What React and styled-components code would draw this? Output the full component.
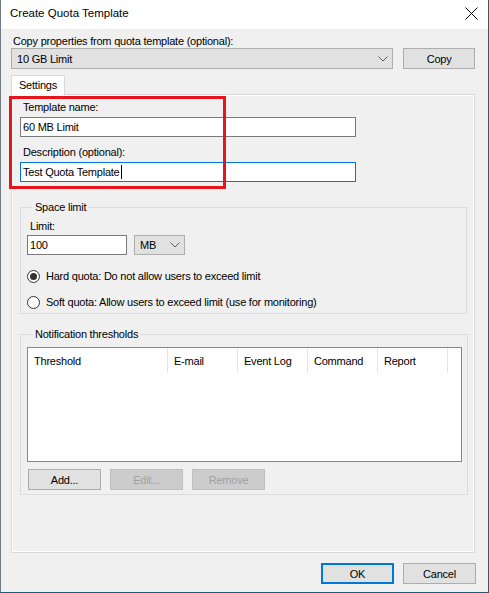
import React from 'react';
import styled, { createGlobalStyle, css } from 'styled-components';

const GlobalStyle = createGlobalStyle`
  html, body {
    margin: 0;
    padding: 0;
    background: #ffffff;
  }
  body {
    font-family: 'Liberation Sans', Arial, sans-serif;
    font-size: 11px;
    letter-spacing: -0.22px;
    color: #000;
  }
  * {
    box-sizing: border-box;
  }
`;

const Window = styled.div`
  position: relative;
  width: 489px;
  height: 593px;
  background: #f0f0f0;
  border-left: 1px solid #6f7a84;
  border-right: 1px solid #3d5668;
  border-bottom: 1px solid #1b5b78;
  display: flex;
  flex-direction: column;
`;

const TitleBar = styled.div`
  height: 29px;
  background: #ffffff;
  display: flex;
  align-items: center;
  justify-content: space-between;
  padding: 0 10px 3px 9px;
  flex: none;
`;

const Title = styled.span`
  font-size: 11.5px;
  letter-spacing: 0;
  line-height: 16px;
`;

const Body = styled.div`
  flex: 1;
  display: flex;
  flex-direction: column;
  padding: 5px 13px 8px 10px;
`;

const Label = styled.div`
  line-height: 14px;
  height: 14px;
  margin-left: ${p => p.indent || 0}px;
  margin-top: ${p => p.top || 0}px;
`;

const Row = styled.div`
  display: flex;
  align-items: center;
  gap: ${p => p.gap || 0}px;
  margin-top: ${p => p.top || 0}px;
  margin-left: ${p => p.left || 0}px;
  justify-content: ${p => (p.end ? 'flex-end' : 'flex-start')};
`;

const Combo = styled.div`
  width: ${p => p.width}px;
  height: ${p => p.height || 21}px;
  background: #e1e1e1;
  border: 1px solid #adadad;
  display: flex;
  align-items: center;
  justify-content: space-between;
  padding: 0 4px 0 5px;
`;

const Button = styled.div`
  width: ${p => p.width || 73}px;
  height: 21px;
  background: #e1e1e1;
  border: 1px solid #adadad;
  display: flex;
  align-items: center;
  justify-content: center;
  ${p => p.disabled && css`
    background: #cccccc;
    border-color: #bfbfbf;
    color: #a0a0a0;
  `}
  ${p => p.primary && css`
    border: 2px solid #0078d7;
  `}
`;

const TabStrip = styled.div`
  display: flex;
  margin-top: 6px;
  position: relative;
  z-index: 1;
  margin-bottom: -1px;
`;

const Tab = styled.div`
  width: 54px;
  height: 20px;
  background: #ffffff;
  border: 1px solid #d9d9d9;
  border-bottom: none;
  display: flex;
  align-items: center;
  justify-content: center;
  padding-bottom: 1px;
`;

const Panel = styled.div`
  height: 459px;
  border: 1px solid #d9d9d9;
  box-shadow: inset 0 0 0 1px #ffffff;
  padding: 5px 7px 0 8px;
  display: flex;
  flex-direction: column;
`;

const Field = styled.div`
  width: ${p => p.width}px;
  height: 20px;
  background: #ffffff;
  border: 1px solid ${p => (p.focused ? '#0078d7' : '#7a7a7a')};
  display: flex;
  align-items: center;
  padding-left: 2px;
  margin-top: ${p => p.top || 0}px;
`;

const Caret = styled.span`
  display: inline-block;
  width: 1px;
  height: 14px;
  background: #000;
  margin-left: 1px;
`;

const Group = styled.fieldset`
  margin: ${p => p.top || 0}px ${p => p.right || 0}px 0 0;
  padding: ${p => p.pad};
  border: 1px solid #dcdcdc;
  min-width: 0;
`;

const Legend = styled.legend`
  padding: 0 2px;
  margin-left: 6px;
  line-height: 14px;
`;

const Radio = styled.span`
  width: 13px;
  height: 13px;
  border-radius: 50%;
  border: 1px solid #333333;
  background: #ffffff;
  display: flex;
  align-items: center;
  justify-content: center;
  flex: none;
  &::after {
    content: '';
    width: 7px;
    height: 7px;
    border-radius: 50%;
    background: ${p => (p.checked ? '#333333' : 'transparent')};
  }
`;

const RadioRow = styled.div`
  display: flex;
  align-items: center;
  gap: 6px;
  height: 16px;
  margin-top: ${p => p.top}px;
`;

const ListView = styled.div`
  width: 435px;
  height: 115px;
  background: #ffffff;
  border: 1px solid #828790;
`;

const ListHeader = styled.div`
  display: flex;
  height: 25px;
`;

const HeaderCell = styled.div`
  width: ${p => p.width}px;
  height: 25px;
  border-right: 1px solid #e5e5e5;
  display: flex;
  align-items: center;
  padding: 1px 0 0 6px;
  flex: none;
`;

const Chevron = () => (
  <svg width="10" height="6" viewBox="0 0 10 6">
    <path d="M0.5 0.5 L5 5 L9.5 0.5" fill="none" stroke="#5f5f5f" strokeWidth="1" />
  </svg>
);

const CloseIcon = () => (
  <svg width="13" height="13" viewBox="0 0 13 13">
    <path d="M0.5 0.5 L12.5 12.5 M12.5 0.5 L0.5 12.5" stroke="#000" strokeWidth="1" />
  </svg>
);

const Highlight = styled.div`
  position: absolute;
  left: 8px;
  top: 96px;
  width: 217px;
  height: 93px;
  border: 3px solid #e8141c;
  pointer-events: none;
`;

export default function App() {
  return (
    <>
      <GlobalStyle />
      <Window>
        <TitleBar>
          <Title>Create Quota Template</Title>
          <CloseIcon />
        </TitleBar>
        <Body>
          <Label indent={2}>Copy properties from quota template (optional):</Label>
          <Row gap={10}>
            <Combo width={384}>
              <span>10 GB Limit</span>
              <Chevron />
            </Combo>
            <Button width={72}>Copy</Button>
          </Row>
          <TabStrip>
            <Tab>Settings</Tab>
          </TabStrip>
          <Panel>
            <Label indent={3}>Template name:</Label>
            <Field width={336} top={3}>60 MB Limit</Field>
            <Label indent={3} top={8}>Description (optional):</Label>
            <Field width={336} top={3} focused>
              Test Quota Template<Caret />
            </Field>

            <Group top={18} pad="5px 6px 3px 6px">
              <Legend>Space limit</Legend>
              <Label indent={3}>Limit:</Label>
              <Row gap={7} top={2}>
                <Field width={100}>100</Field>
                <Combo width={51} height={20}>
                  <span>MB</span>
                  <Chevron />
                </Combo>
              </Row>
              <RadioRow top={13}>
                <Radio checked />
                <span>Hard quota: Do not allow users to exceed limit</span>
              </RadioRow>
              <RadioRow top={10}>
                <Radio />
                <span>Soft quota: Allow users to exceed limit (use for monitoring)</span>
              </RadioRow>
            </Group>

            <Group top={13} right={-1} pad="6px 4px 4px 6px">
              <Legend>Notification thresholds</Legend>
              <ListView>
                <ListHeader>
                  <HeaderCell width={140}>Threshold</HeaderCell>
                  <HeaderCell width={70}>E-mail</HeaderCell>
                  <HeaderCell width={70}>Event Log</HeaderCell>
                  <HeaderCell width={70}>Command</HeaderCell>
                  <HeaderCell width={70}>Report</HeaderCell>
                </ListHeader>
              </ListView>
              <Row gap={9} top={7} left={1}>
                <Button>Add...</Button>
                <Button disabled>Edit...</Button>
                <Button disabled>Remove</Button>
              </Row>
            </Group>
          </Panel>
          <Row gap={9} top={10} end>
            <Button primary>OK</Button>
            <Button style={{ marginRight: -1 }}>Cancel</Button>
          </Row>
        </Body>
        <Highlight />
      </Window>
    </>
  );
}
